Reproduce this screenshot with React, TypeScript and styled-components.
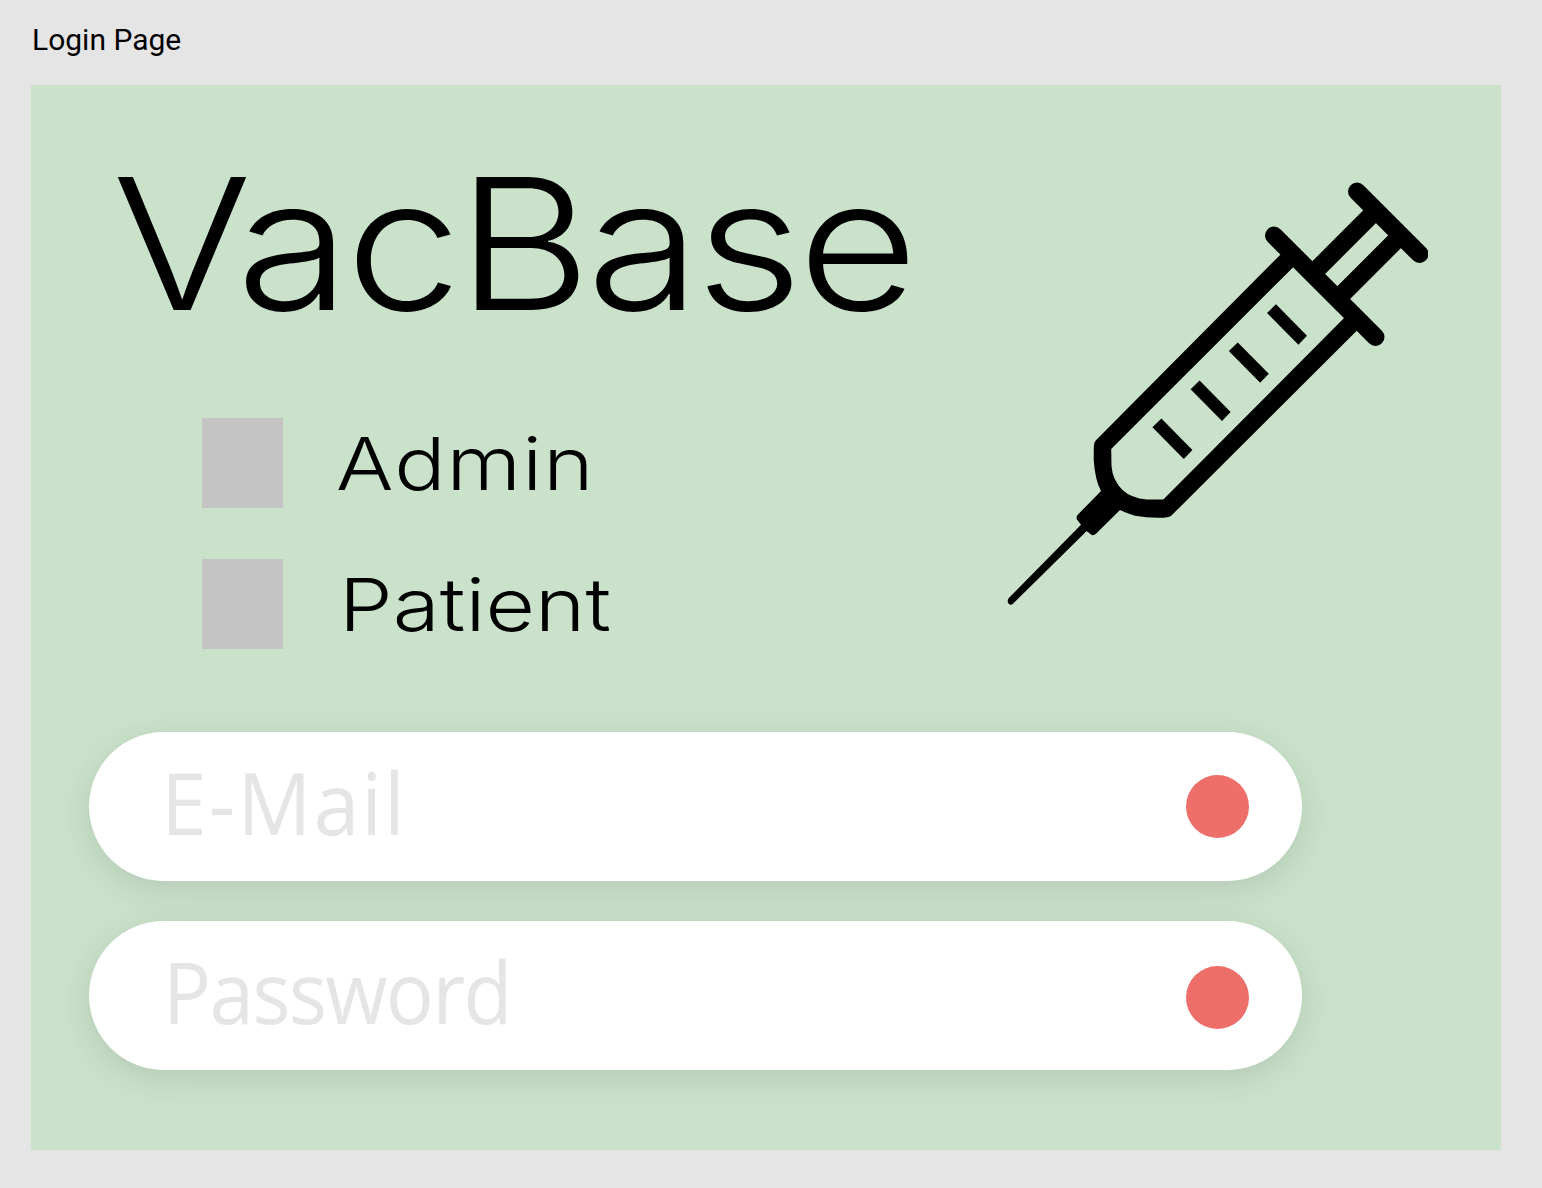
import React from 'react';
import styled, { createGlobalStyle } from 'styled-components';

const GlobalStyle = createGlobalStyle`
  * { box-sizing: border-box; }
  body { margin: 0; background: #e5e5e5; }
`;

const Page = styled.main`
  width: 1542px;
  height: 1188px;
  padding: 22px 0 0 31px;
  overflow: hidden;
  background: #e5e5e5;
`;

const FrameLabel = styled.div`
  height: 63px;
  padding-left: 1px;
  font: 400 30px/36px Roboto, sans-serif;
  color: #000;
  white-space: nowrap;
`;

const Panel = styled.section`
  display: flex;
  flex-direction: column;
  width: 1470px;
  height: 1065px;
  padding: 67px 0 0 58px;
  background: #cae2ca;
`;

const Hero = styled.div`
  display: flex;
  justify-content: space-between;
  height: 580px;
  padding-right: 73px;
`;

const Title = styled.h1`
  margin: 0 0 83px 23px;
  font: 300 183px/183px Inter, sans-serif;
  letter-spacing: -4.5px;
  color: #000;
  white-space: nowrap;
  transform: scaleX(1.136);
  transform-origin: left center;
`;

const Roles = styled.div`
  display: flex;
  flex-direction: column;
  gap: 51px;
  padding-left: 113px;
`;

const Role = styled.label`
  display: flex;
  align-items: center;
  height: 90px;
`;

const Box = styled.span`
  width: 81px;
  height: 90px;
  background: #c4c4c4;
`;

const RoleName = styled.span<{ $indent: number; $track: number }>`
  margin-left: ${(p) => p.$indent}px;
  padding-top: 2px;
  font: 300 73px/88px Inter, sans-serif;
  letter-spacing: ${(p) => p.$track}px;
  color: #000;
  white-space: nowrap;
  transform: scaleX(1.17);
  transform-origin: left center;
`;

const SyringeArt = styled.svg`
  display: block;
  flex: none;
  margin-top: 28px;
`;

const Fields = styled.div`
  display: flex;
  flex-direction: column;
  gap: 40px;
`;

const Field = styled.div`
  display: flex;
  align-items: center;
  justify-content: space-between;
  width: 1213px;
  height: 149px;
  padding: 0 53px 0 72px;
  border-radius: 75px;
  background: #fff;
  box-shadow: 0 8px 34px rgba(0, 0, 0, 0.115);
`;

const Placeholder = styled.span<{ $track: number; $indent: number; $stretch: number }>`
  margin-left: ${(p) => p.$indent}px;
  padding-bottom: 9px;
  font: 430 86px/118px 'Open Sans', 'Noto Sans', sans-serif;
  letter-spacing: ${(p) => p.$track}px;
  color: #e5e5e5;
  white-space: nowrap;
  transform: scaleX(${(p) => p.$stretch});
  transform-origin: left center;
`;

const Dot = styled.span<{ $drop: number }>`
  width: 63px;
  height: 63px;
  margin-top: ${(p) => p.$drop}px;
  border-radius: 50%;
  background: #ee6e69;
`;

const marks = [0, 1, 2, 3];

function Syringe() {
  return (
    <SyringeArt width="428" height="430" viewBox="1000 180 428 430" aria-label="Syringe">
      <g stroke="#000" strokeWidth="18" fill="none">
        <path strokeLinecap="round" d="M1357 191.5 L1419.5 254 M1274 235.5 L1375.5 337" />
        <path d="M1312.4 273.9 L1375.9 210.4 M1337.4 298.9 L1400.9 235.4" />
      </g>
      <path d="M1286.8 248.2 L1095.7 440.6 Q1094 442.5 1093.8 446.7 L1093.7 460 Q1095 480 1101 491 L1077.5 515 Q1075.5 518 1077.5 520.3 L1081 524.8 L1008.6 598.2 Q1006.8 601 1008.5 603.5 Q1010.5 606 1013 603.7 L1086.7 531 L1091 534.6 Q1093.2 536.2 1096.5 533.3 L1120 510 Q1127 513.5 1135 515.8 Q1147 518 1160 517.8 Q1168.5 517.8 1171.2 515.8 L1363 324.5 L1350.3 311.8 L1163.3 499.6 L1147 499.6 Q1131 498 1122.5 490 Q1112.5 480 1111.5 466 L1111.2 448.9 L1299.5 260.9 Z" />
      {marks.map((n) => (
        <path key={n} transform={`translate(${-38.2 * n} ${38.1 * n})`} d="M1276 304.3 L1267 313 L1298.4 344.7 L1307 335.7 Z" />
      ))}
    </SyringeArt>
  );
}

export default function App() {
  return (
    <>
      <GlobalStyle />
      <Page>
        <FrameLabel>Login Page</FrameLabel>
        <Panel>
          <Hero>
            <div>
              <Title>VacBase</Title>
              <Roles>
                <Role>
                  <Box />
                  <RoleName $indent={53} $track={0.9}>Admin</RoleName>
                </Role>
                <Role>
                  <Box />
                  <RoleName $indent={56} $track={0.1}>Patient</RoleName>
                </Role>
              </Roles>
            </div>
            <Syringe />
          </Hero>
          <Fields>
            <Field>
              <Placeholder $track={2} $indent={0} $stretch={0.96}>E-Mail</Placeholder>
              <Dot $drop={0} />
            </Field>
            <Field>
              <Placeholder $track={-1.7} $indent={2} $stretch={0.93}>Password</Placeholder>
              <Dot $drop={4} />
            </Field>
          </Fields>
        </Panel>
      </Page>
    </>
  );
}
